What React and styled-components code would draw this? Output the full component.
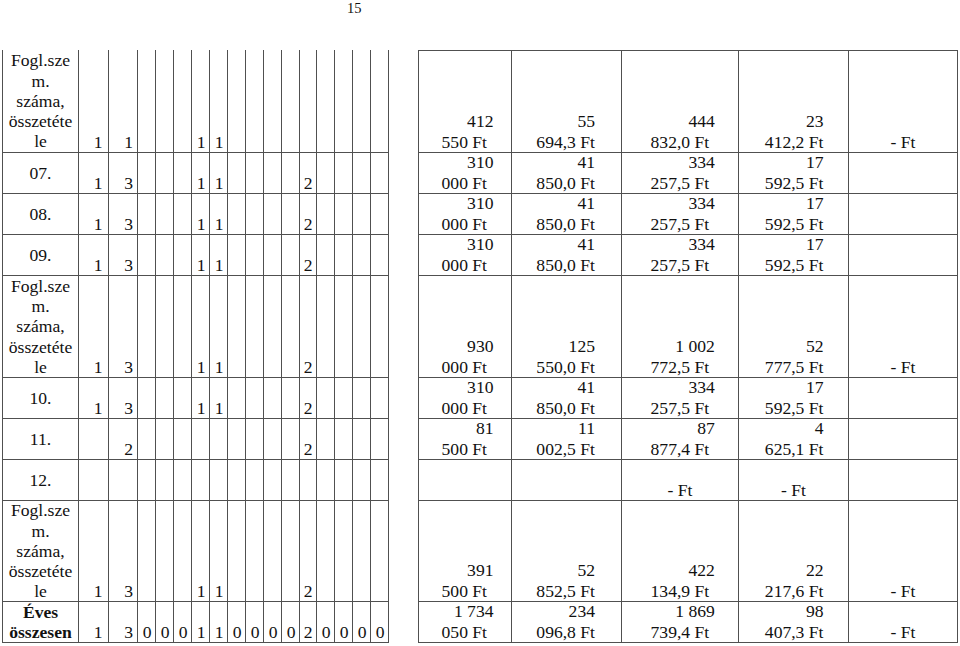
import React from "react";
import styled, { createGlobalStyle } from "styled-components";

const LINE = "#505050";

const GlobalStyle = createGlobalStyle`
  * { box-sizing: border-box; }
  html, body { margin: 0; padding: 0; background: #fff; }
  body {
    font-family: "Liberation Serif", "Times New Roman", serif;
    color: #111;
  }
`;

const Page = styled.div`
  width: 960px;
  height: 646px;
  overflow: hidden;
  display: flex;
  flex-direction: column;
`;

const PageNumber = styled.div`
  height: 50px;
  padding-left: 347px;
  font-size: 14.5px;
  line-height: 16px;
`;

const Tables = styled.div`
  display: flex;
  align-items: flex-start;
  gap: 29px;
  padding-left: 2px;
`;

const Sheet = styled.div`
  display: grid;
  grid-template-columns: ${(p) => p.$cols};
  grid-template-rows: ${(p) => p.$rows};
  border-left: 1px solid ${LINE};
  border-top: ${(p) => (p.$top ? `1px solid ${LINE}` : "none")};
  font-size: 17.6px;
  line-height: 20.3px;
`;

const Cell = styled.div`
  border-right: 1px solid ${LINE};
  border-bottom: 1px solid ${LINE};
  display: flex;
  flex-direction: column;
  min-width: 0;
  white-space: nowrap;
`;

const LabelCell = styled(Cell)`
  justify-content: center;
  align-items: center;
  text-align: center;
  font-weight: ${(p) => (p.$bold ? 700 : 400)};
`;

const CountCell = styled(Cell)`
  justify-content: flex-end;
  align-items: flex-end;
  padding-right: ${(p) => p.$pad}px;
`;

const AmountCell = styled(Cell)`
  justify-content: flex-end;
  align-items: stretch;
  text-align: ${(p) => (p.$center ? "center" : "right")};
`;

const AmountLine = styled.div`
  padding-right: ${(p) => p.$pad || 0}px;
`;

const F = ["1", "3", "", "", "", "1", "1", "", "", "", "", "2", "", "", "", ""];
const FOGL = ["Fogl.sze", "m.", "száma,", "összetéte", "le"];

const rows = [
  {
    label: FOGL,
    counts: ["1", "1", "", "", "", "1", "1", "", "", "", "", "", "", "", "", ""],
    amounts: ["412|550 Ft", "55|694,3 Ft", "444|832,0 Ft", "23|412,2 Ft", "- Ft"],
  },
  { label: ["07."], counts: F, amounts: ["310|000 Ft", "41|850,0 Ft", "334|257,5 Ft", "17|592,5 Ft", ""] },
  { label: ["08."], counts: F, amounts: ["310|000 Ft", "41|850,0 Ft", "334|257,5 Ft", "17|592,5 Ft", ""] },
  { label: ["09."], counts: F, amounts: ["310|000 Ft", "41|850,0 Ft", "334|257,5 Ft", "17|592,5 Ft", ""] },
  {
    label: FOGL,
    counts: F,
    amounts: ["930|000 Ft", "125|550,0 Ft", "1\u00a0002|772,5 Ft", "52|777,5 Ft", "- Ft"],
  },
  { label: ["10."], counts: F, amounts: ["310|000 Ft", "41|850,0 Ft", "334|257,5 Ft", "17|592,5 Ft", ""] },
  {
    label: ["11."],
    counts: ["", "2", "", "", "", "", "", "", "", "", "", "2", "", "", "", ""],
    amounts: ["81|500 Ft", "11|002,5 Ft", "87|877,4 Ft", "4|625,1 Ft", ""],
  },
  { label: ["12."], counts: Array(16).fill(""), amounts: ["", "", "- Ft", "- Ft", ""] },
  {
    label: FOGL,
    counts: F,
    amounts: ["391|500 Ft", "52|852,5 Ft", "422|134,9 Ft", "22|217,6 Ft", "- Ft"],
  },
  {
    label: ["Éves", "összesen"],
    bold: true,
    counts: ["1", "3", "0", "0", "0", "1", "1", "0", "0", "0", "0", "2", "0", "0", "0", "0"],
    amounts: ["1\u00a0734|050 Ft", "234|096,8 Ft", "1\u00a0869|739,4 Ft", "98|407,3 Ft", "- Ft"],
  },
];

const heights = [102, 41, 41, 41, 102, 41, 41, 41, 101, 41];
const leftRows = heights.map((h, i) => `${i === 0 ? h + 1 : h}px`).join(" ");
const rightRows = heights.map((h) => `${h}px`).join(" ");

const leftCols = "76px 30px 29px repeat(9, 18px) 17px repeat(4, 18px)";
const rightCols = "93px 110px 117px 110px 109px";

const countPad = (i) => (i === 0 ? 5.5 : i === 1 ? 4 : 3.5);
const amountPads = [
  [17.5, 24],
  [26, 26],
  [23.2, 28.8],
  [24.5, 24.5],
];

function Amount({ value, col }) {
  if (value.includes("|")) {
    const [a, b] = value.split("|");
    const [p1, p2] = amountPads[col];
    return (
      <AmountCell>
        <AmountLine $pad={p1}>{a}</AmountLine>
        <AmountLine $pad={p2}>{b}</AmountLine>
      </AmountCell>
    );
  }
  return (
    <AmountCell $center>
      <AmountLine>{value}</AmountLine>
    </AmountCell>
  );
}

export default function App() {
  return (
    <Page>
      <GlobalStyle />
      <PageNumber>15</PageNumber>
      <Tables>
        <Sheet $cols={leftCols} $rows={leftRows}>
          {rows.map((r, ri) => (
            <React.Fragment key={ri}>
              <LabelCell $bold={r.bold}>
                {r.label.map((l, li) => (
                  <div key={li}>{l}</div>
                ))}
              </LabelCell>
              {r.counts.map((c, ci) => (
                <CountCell key={ci} $pad={countPad(ci)}>
                  {c}
                </CountCell>
              ))}
            </React.Fragment>
          ))}
        </Sheet>
        <Sheet $cols={rightCols} $rows={rightRows} $top>
          {rows.map((r, ri) =>
            r.amounts.map((a, ai) => <Amount key={`${ri}-${ai}`} value={a} col={ai} />)
          )}
        </Sheet>
      </Tables>
    </Page>
  );
}
